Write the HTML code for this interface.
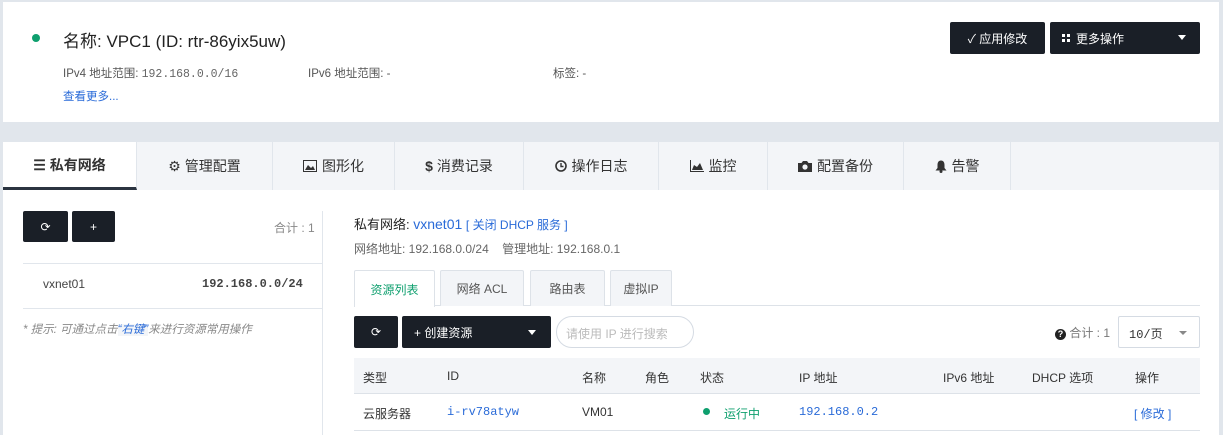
<!DOCTYPE html>
<html><head><meta charset="utf-8"><style>
*{box-sizing:border-box;margin:0;padding:0}
body{width:1223px;height:435px;overflow:hidden;background:#e1e6ec;font-family:"Liberation Sans","Noto Sans CJK SC",sans-serif;font-size:12px;color:#333;position:relative}
.abs{position:absolute}
.mono{font-family:"Liberation Mono","Noto Sans CJK SC",monospace}
.btn{position:absolute;background:#1a1f27;color:#fff;border-radius:2px;font-size:12px;display:flex;align-items:center}
.tab{position:absolute;top:0;height:48px;display:flex;align-items:center;justify-content:center;font-size:14px;color:#333;border-right:1px solid #e1e6ec}
.tab svg{margin-right:5px}
.stab{position:absolute;top:270px;height:36px;border:1px solid #dde2e8;border-bottom:none;background:#f3f5f8;display:flex;align-items:center;justify-content:center;font-size:12px;color:#555;border-radius:2px 2px 0 0}
.th{position:absolute;top:369px;font-size:12px;color:#333}
</style></head><body>
<div class="abs" style="left:3px;top:2px;width:1216px;height:120px;background:#fff"></div>
<div class="abs" style="left:32px;top:34px;width:8px;height:8px;border-radius:50%;background:#0e9f6e"></div>
<div class="abs" style="left:63px;top:27px;font-size:17px;color:#222">名称: VPC1 (ID: rtr-86yix5uw)</div>
<div class="abs" style="left:63px;top:65px;color:#555;font-size:11.5px">IPv4 地址范围: <span class="mono" style="color:#666">192.168.0.0/16</span></div>
<div class="abs" style="left:308px;top:65px;color:#555;font-size:11.5px">IPv6 地址范围: -</div>
<div class="abs" style="left:553px;top:65px;color:#555;font-size:11.5px">标签: -</div>
<div class="abs" style="left:63px;top:88px;color:#2a6bd8;font-size:11.5px">查看更多...</div>
<div class="btn" style="left:950px;top:22px;width:95px;height:32px;justify-content:center">✓ 应用修改</div>
<div class="btn" style="left:1050px;top:22px;width:150px;height:32px;padding-left:12px">
<svg width="8" height="8" viewBox="0 0 8 8" fill="#fff"><rect x="0" y="0" width="3" height="3"/><rect x="5" y="0" width="3" height="3"/><rect x="0" y="5" width="3" height="3"/><rect x="5" y="5" width="3" height="3"/></svg>
<span style="margin-left:6px">更多操作</span>
<span style="position:absolute;right:14px;top:13px;border-left:4px solid transparent;border-right:4px solid transparent;border-top:5px solid #fff"></span></div>

<div class="abs" style="left:3px;top:142px;width:1216px;height:48px;background:#f3f5f8">
<div class="tab" style="left:0;width:134px;background:#fff;border-bottom:3px solid #2b3440;font-weight:bold">☰ 私有网络</div>
<div class="tab" style="left:134px;width:136px">⚙ 管理配置</div>
<div class="tab" style="left:270px;width:122px"><svg width="14" height="12" viewBox="0 0 14 12"><rect x="0.5" y="0.5" width="13" height="11" fill="none" stroke="#333"/><path d="M2 10 L5 5 L8 8 L10 6 L12 10Z" fill="#333"/></svg>图形化</div>
<div class="tab" style="left:392px;width:129px"><b>$</b>&nbsp;消费记录</div>
<div class="tab" style="left:521px;width:135px"><svg width="12" height="12" viewBox="0 0 12 12"><circle cx="6" cy="6" r="5" fill="none" stroke="#333" stroke-width="1.6"/><path d="M6 3V6.5H8.5" fill="none" stroke="#333" stroke-width="1.4"/></svg>操作日志</div>
<div class="tab" style="left:656px;width:109px"><svg width="14" height="12" viewBox="0 0 14 12"><path d="M0.5 0V11.5H14" fill="none" stroke="#333"/><path d="M2 10 L4 5 L7 7 L10 3 L13 10Z" fill="#333"/></svg>监控</div>
<div class="tab" style="left:765px;width:136px"><svg width="14" height="12" viewBox="0 0 14 12"><path d="M0 3H3.5L5 1H9L10.5 3H14V12H0Z" fill="#333"/><circle cx="7" cy="7" r="2.6" fill="#f3f5f8"/></svg>配置备份</div>
<div class="tab" style="left:901px;width:107px"><svg width="12" height="13" viewBox="0 0 12 13"><path d="M6 0.5C3.5 0.5 2.5 2.5 2.5 5V8L0.5 10.5H11.5L9.5 8V5C9.5 2.5 8.5 0.5 6 0.5Z" fill="#333"/><circle cx="6" cy="11.5" r="1.5" fill="#333"/></svg>告警</div>
</div>
<div class="abs" style="left:3px;top:190px;width:1216px;height:245px;background:#fff"></div>

<div class="btn" style="left:23px;top:211px;width:45px;height:31px;justify-content:center">⟳</div>
<div class="btn" style="left:72px;top:211px;width:43px;height:31px;justify-content:center">+</div>
<div class="abs" style="left:274px;top:219px;color:#888">合计 : 1</div>
<div class="abs" style="left:322px;top:211px;width:1px;height:224px;background:#e1e6ec"></div>
<div class="abs" style="left:23px;top:263px;width:300px;height:1px;background:#e1e6ec"></div>
<div class="abs" style="left:23px;top:308px;width:300px;height:1px;background:#e1e6ec"></div>
<div class="abs" style="left:43px;top:277px;color:#444">vxnet01</div>
<div class="abs mono" style="left:202px;top:277px;color:#444;font-weight:bold">192.168.0.0/24</div>
<div class="abs" style="left:23px;top:321px;color:#888;font-style:italic;font-size:11.5px">* 提示: 可通过点击<span style="color:#2a6bd8;background:#f3f5f8">“右键”</span>来进行资源常用操作</div>

<div class="abs" style="left:354px;top:214px;font-size:13px;color:#222">私有网络: <span style="color:#2a6bd8;font-size:14px">vxnet01</span> <span style="color:#2a6bd8;font-size:12px">[ 关闭 DHCP 服务 ]</span></div>
<div class="abs" style="left:354px;top:240px;color:#666">网络地址: 192.168.0.0/24 &nbsp;&nbsp;&nbsp;管理地址: 192.168.0.1</div>
<div class="abs" style="left:354px;top:305px;width:846px;height:1px;background:#dde2e8"></div>
<div class="stab" style="left:354px;width:81px;background:#fff;height:37px;color:#0e9f6e">资源列表</div>
<div class="stab" style="left:440px;width:84px">网络 ACL</div>
<div class="stab" style="left:530px;width:75px">路由表</div>
<div class="stab" style="left:610px;width:62px">虚拟IP</div>

<div class="btn" style="left:354px;top:316px;width:44px;height:32px;justify-content:center">⟳</div>
<div class="btn" style="left:402px;top:316px;width:149px;height:32px;padding-left:12px">+ 创建资源<span style="position:absolute;right:15px;top:14px;border-left:4px solid transparent;border-right:4px solid transparent;border-top:5px solid #fff"></span></div>
<div class="abs" style="left:556px;top:316px;width:138px;height:32px;border:1px solid #d5dbe3;border-radius:16px;padding:8px 0 0 9px;color:#bbb;font-size:12px">请使用 IP 进行搜索</div>
<div class="abs" style="left:1055px;top:324px;color:#777"><span style="display:inline-block;width:11px;height:11px;border-radius:50%;background:#222;color:#fff;font-size:9px;text-align:center;line-height:11px;font-weight:bold">?</span> 合计 : 1</div>
<div class="abs" style="left:1118px;top:316px;width:82px;height:32px;border:1px solid #d5dbe3;border-radius:2px;padding:8px 0 0 10px" ><span class="mono">10/页</span><span style="position:absolute;right:12px;top:14px;border-left:4px solid transparent;border-right:4px solid transparent;border-top:4px solid #888"></span></div>

<div class="abs" style="left:354px;top:358px;width:846px;height:36px;background:#f3f5f8;border-bottom:1px solid #dde2e8"></div>
<div class="th" style="left:363px">类型</div><div class="th" style="left:447px">ID</div><div class="th" style="left:582px">名称</div><div class="th" style="left:645px">角色</div><div class="th" style="left:700px">状态</div><div class="th" style="left:799px">IP 地址</div><div class="th" style="left:943px">IPv6 地址</div><div class="th" style="left:1032px">DHCP 选项</div><div class="th" style="left:1135px">操作</div>
<div class="abs" style="left:354px;top:430px;width:846px;height:1px;background:#dde2e8"></div>
<div class="th" style="left:363px;top:405px">云服务器</div>
<div class="th mono" style="left:447px;top:405px;color:#2a6bd8">i-rv78atyw</div>
<div class="th" style="left:582px;top:405px">VM01</div>
<div class="abs" style="left:703px;top:408px;width:7px;height:7px;border-radius:50%;background:#0e9f6e"></div>
<div class="th" style="left:724px;top:405px;color:#0e9f6e">运行中</div>
<div class="th mono" style="left:799px;top:405px;color:#2a6bd8">192.168.0.2</div>
<div class="th" style="left:1134px;top:405px;color:#2a6bd8">[ 修改 ]</div>
</body></html>
